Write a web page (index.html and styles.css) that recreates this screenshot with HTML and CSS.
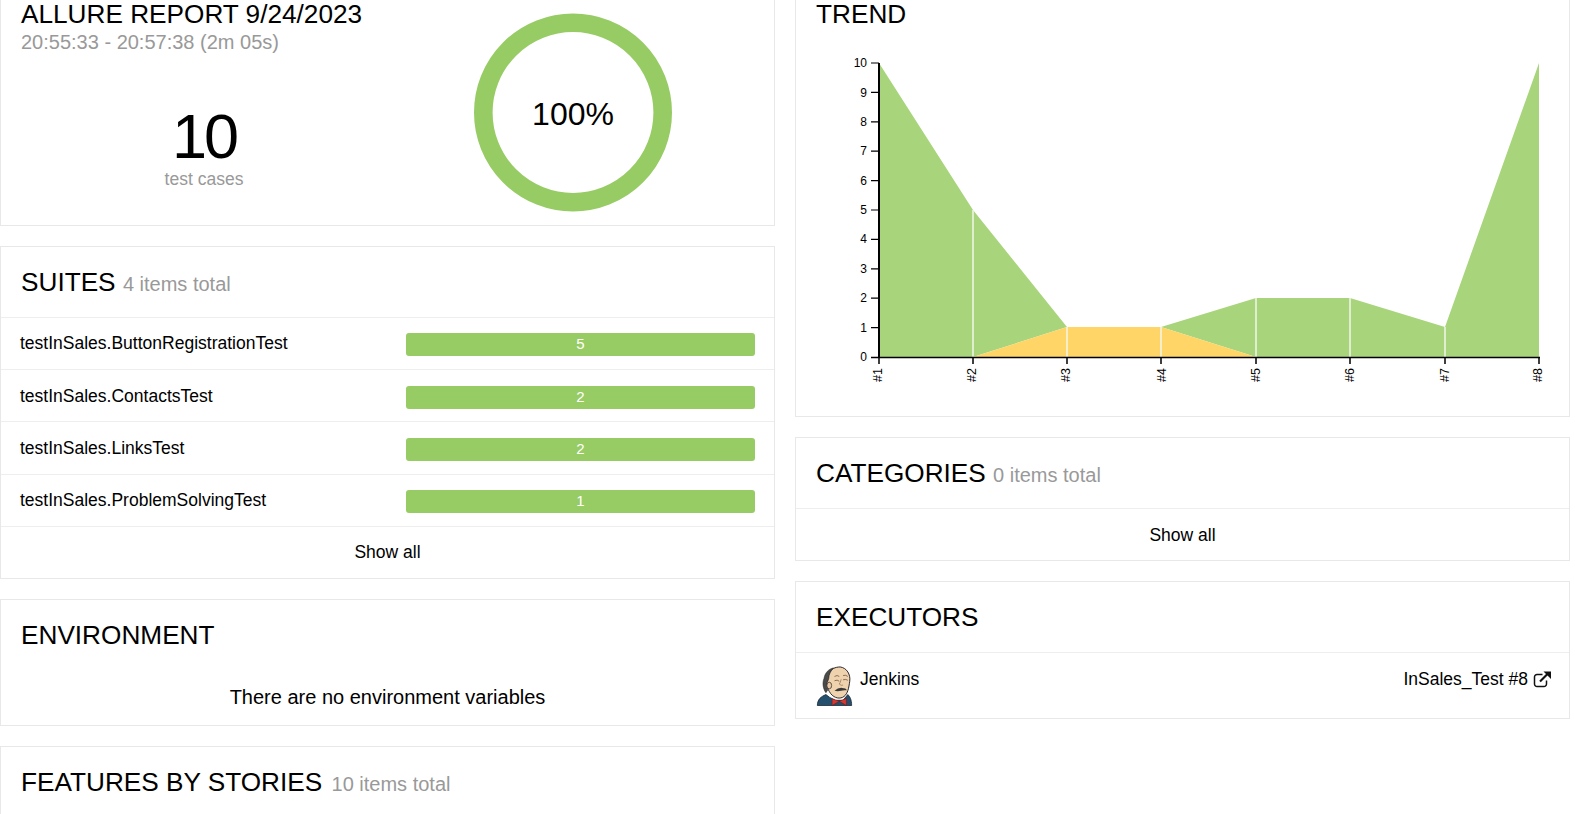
FILE: index.html
```html
<!DOCTYPE html>
<html lang="en">
<head>
<meta charset="utf-8">
<title>Allure Report</title>
<link rel="stylesheet" href="styles.css">
</head>
<body>
<main class="grid">
  <div class="col">
    <section class="card card-summary">
      <div class="summary-text">
        <h2 class="title title-top">ALLURE REPORT 9/24/2023</h2>
        <div class="range">20:55:33 - 20:57:38 (2m 05s)</div>
        <div class="count">
          <div class="count-num">10</div>
          <div class="count-label">test cases</div>
        </div>
      </div>
      <div class="donut">
        <svg width="200" height="200" viewBox="0 0 200 200"><circle cx="100" cy="99.5" r="89.7" fill="none" stroke="#97cc64" stroke-width="18.6"/></svg>
        <div class="donut-label">100%</div>
      </div>
    </section>
    <section class="card">
      <div class="head"><h2 class="title">SUITES <span class="muted">4 items total</span></h2></div>
      <div class="row"><div class="row-name">testInSales.ButtonRegistrationTest</div><div class="bar">5</div></div>
      <div class="row"><div class="row-name">testInSales.ContactsTest</div><div class="bar">2</div></div>
      <div class="row"><div class="row-name">testInSales.LinksTest</div><div class="bar">2</div></div>
      <div class="row"><div class="row-name">testInSales.ProblemSolvingTest</div><div class="bar">1</div></div>
      <div class="show">Show all</div>
    </section>
    <section class="card">
      <div class="head head-plain"><h2 class="title">ENVIRONMENT</h2></div>
      <div class="empty">There are no environment variables</div>
    </section>
    <section class="card card-last">
      <div class="head"><h2 class="title">FEATURES BY STORIES <span class="muted muted-wide">10 items total</span></h2></div>
    </section>
  </div>
  <div class="col">
    <section class="card card-trend">
      <h2 class="title title-top">TREND</h2>
      <svg class="chart" width="773" height="385" viewBox="796 30 773 385">
        <polygon fill="#a8d57b" points="879,63 973,210 1067,327 973,357 879,357"/>
        <polygon fill="#a8d57b" points="1161,327 1256,298 1350,298 1445,327 1539,63 1539,357 1256,357"/>
        <polygon fill="#ffd567" points="973,357 1067,327 1161,327 1256,357"/>
        <g stroke="#f1f6ea" stroke-width="1.5">
          <line x1="973" y1="210" x2="973" y2="357"/>
          <line x1="1067" y1="327" x2="1067" y2="357"/>
          <line x1="1161" y1="327" x2="1161" y2="357"/>
          <line x1="1256" y1="298" x2="1256" y2="357"/>
          <line x1="1350" y1="298" x2="1350" y2="357"/>
          <line x1="1445" y1="327" x2="1445" y2="357"/>
        </g>
        <g stroke="#000" fill="none">
          <path stroke-width="2" d="M879 63V357"/>
          <path stroke-width="1.5" d="M871 357.5H1540"/>
          <path stroke-width="1.2" d="M871 63H879M871 92.4H879M871 121.8H879M871 151.2H879M871 180.6H879M871 210H879M871 239.4H879M871 268.8H879M871 298.2H879M871 327.6H879"/>
          <path stroke-width="1.5" d="M879 357V364M973 357V364M1067 357V364M1161 357V364M1256 357V364M1350 357V364M1445 357V364M1539 357V364"/>
        </g>
        <g class="tick-y" text-anchor="end">
          <text x="867" y="67">10</text><text x="867" y="97">9</text><text x="867" y="126">8</text><text x="867" y="155">7</text><text x="867" y="185">6</text><text x="867" y="214">5</text><text x="867" y="243">4</text><text x="867" y="273">3</text><text x="867" y="302">2</text><text x="867" y="332">1</text><text x="867" y="361">0</text>
        </g>
        <g class="tick-x" text-anchor="end">
          <text transform="translate(882 368) rotate(-90)">#1</text>
          <text transform="translate(976 368) rotate(-90)">#2</text>
          <text transform="translate(1070 368) rotate(-90)">#3</text>
          <text transform="translate(1166 368) rotate(-90)">#4</text>
          <text transform="translate(1260 368) rotate(-90)">#5</text>
          <text transform="translate(1354 368) rotate(-90)">#6</text>
          <text transform="translate(1449 368) rotate(-90)">#7</text>
          <text transform="translate(1542 368) rotate(-90)">#8</text>
        </g>
      </svg>
    </section>
    <section class="card">
      <div class="head"><h2 class="title">CATEGORIES <span class="muted">0 items total</span></h2></div>
      <div class="show show-low">Show all</div>
    </section>
    <section class="card">
      <div class="head"><h2 class="title">EXECUTORS</h2></div>
      <div class="exec">
        <svg class="jenkins" width="37" height="40" viewBox="0 0 38 42">
          <path d="M1 41.5C1 35 5 32 10 30l4 3 6 3h8l5-6c2 2 4 5 4 11.5z" fill="#24506e" stroke="#16212b" stroke-width=".8"/>
          <path d="M13 8C15 3 20 1 25 1c7 1 11 8 10 15-1 7-2 13-6 16-4 3-10 2-14-3-2-3-4-6-4-10 0-4 1-8 2-11z" fill="#efd2ae" stroke="#231f20" stroke-width="1"/>
          <path d="M8 13C9 7 13 3 18 2c-3 3-5 7-5 11l-1 3c-2 1-2 6 0 9l-2 3C7 24 6 18 8 13z" fill="#4a4a4a" stroke="#231f20" stroke-width=".6"/>
          <ellipse cx="13.5" cy="20.5" rx="2.5" ry="3.5" fill="#e9c7a3" stroke="#231f20" stroke-width=".7"/>
          <path d="M19 11q3-2 5 0M28 10q3-1 5 1M19 15.500q3-1.500 5 .5M28 14.500q3-1 5 .5" fill="none" stroke="#5a4030" stroke-width=".7"/>
          <path d="M26 14q-1 4-2 5 2 2 4 1" fill="none" stroke="#8d6c52" stroke-width=".7"/>
          <path d="M19 26q4-3.500 8-3 4 0 5 2.500-4-.5-6 .5-4 1-7 0z" fill="#3a3a3a"/>
          <path d="M16.500 34.500l7.500 2.500-7.500 4.500zM31.500 34l-7.500 3 7.500 4.500z" fill="#d33833" stroke="#6d1512" stroke-width=".5"/>
        </svg>
        <div class="exec-name">Jenkins</div>
        <div class="exec-link">InSales_Test #8
          <svg class="ext" width="19" height="17" viewBox="0 0 18 17"><path d="M13 9.500V13a2.500 2.500 0 0 1-2.500 2.500H3.500A2.500 2.500 0 0 1 1 13V6a2.500 2.500 0 0 1 2.500-2.500H9" fill="none" stroke="#111" stroke-width="1.500"/><path d="M6.500 10.500 14 3" stroke="#111" stroke-width="2.200" fill="none"/><path d="M10 .5h7.500V8z" fill="#111"/></svg>
        </div>
      </div>
    </section>
  </div>
</main>
</body>
</html>
```

FILE: styles.css
```css
* { box-sizing: border-box; }
html, body { margin: 0; padding: 0; height: 814px; overflow: hidden; background: #fff; }
body { font-family: "Liberation Sans", Arial, sans-serif; font-size: 17.5px; color: #000; }
.grid { display: grid; grid-template-columns: 775px 775px; column-gap: 20px; align-items: start; }
.col { display: flex; flex-direction: column; gap: 20px; }
.card { border: 1px solid #e8e8e8; background: #fff; }
.card-summary { border-top: 0; height: 226px; display: flex; }
.card-trend { border-top: 0; height: 417px; }
.card-last { height: 100px; }
.summary-text { width: 468px; }
.title { margin: 0; font-size: 26.2px; font-weight: 400; line-height: 32px; color: #000; }
.title-top { padding: 0 0 0 20px; line-height: 29px; }
.range { padding-left: 20px; font-size: 20px; line-height: 26px; color: #999; }
.count { width: 406px; text-align: center; margin-top: 48px; }
.count-num { font-size: 63px; line-height: 66px; letter-spacing: -3px; }
.count-label { font-size: 17.5px; line-height: 20px; color: #999; }
.donut { position: relative; margin: 13px 0 0 4px; width: 200px; height: 200px; }
.donut-label { position: absolute; left: 0; right: 0; top: 81px; text-align: center; font-size: 32px; line-height: 40px; }
.muted { font-size: 20px; color: #999; }
.muted-wide { margin-left: 2px; }
.head { height: 71px; padding: 19px 20px 0; border-bottom: 1px solid #eee; }
.head-plain { border-bottom: 0; height: 62px; }
.row { height: 52.2px; display: flex; align-items: center; justify-content: space-between; padding: 2.6px 19px 0 19px; border-bottom: 1px solid #eee; }
.row-name { font-size: 17.5px; line-height: 24px; margin-top: -3px; }
.bar { width: 349px; height: 23px; background: #97cc64; border-radius: 3px; color: #fff; text-align: center; font-size: 15px; line-height: 21px; }
.show { height: 51px; text-align: center; line-height: 50px; font-size: 17.5px; }
.show-low { line-height: 52px; }
.empty { text-align: center; font-size: 20px; line-height: 56px; padding-top: 7px; height: 63px; }
.chart { display: block; margin-top: 1px; }
.tick-y { font-family: "Liberation Sans", Arial, sans-serif; font-size: 12px; fill: #000; }
.tick-x { font-family: "Liberation Sans", Arial, sans-serif; font-size: 12.5px; fill: #000; }
.exec { height: 65px; display: flex; align-items: flex-start; padding: 13px 17px 0 20px; }
.jenkins { flex: none; margin: 0 7px 0 0; }
.exec-name { font-size: 17.5px; line-height: 26px; }
.exec-link { margin-left: auto; font-size: 17.5px; line-height: 26px; display: flex; align-items: center; gap: 5px; }
.ext { flex: none; }
```
